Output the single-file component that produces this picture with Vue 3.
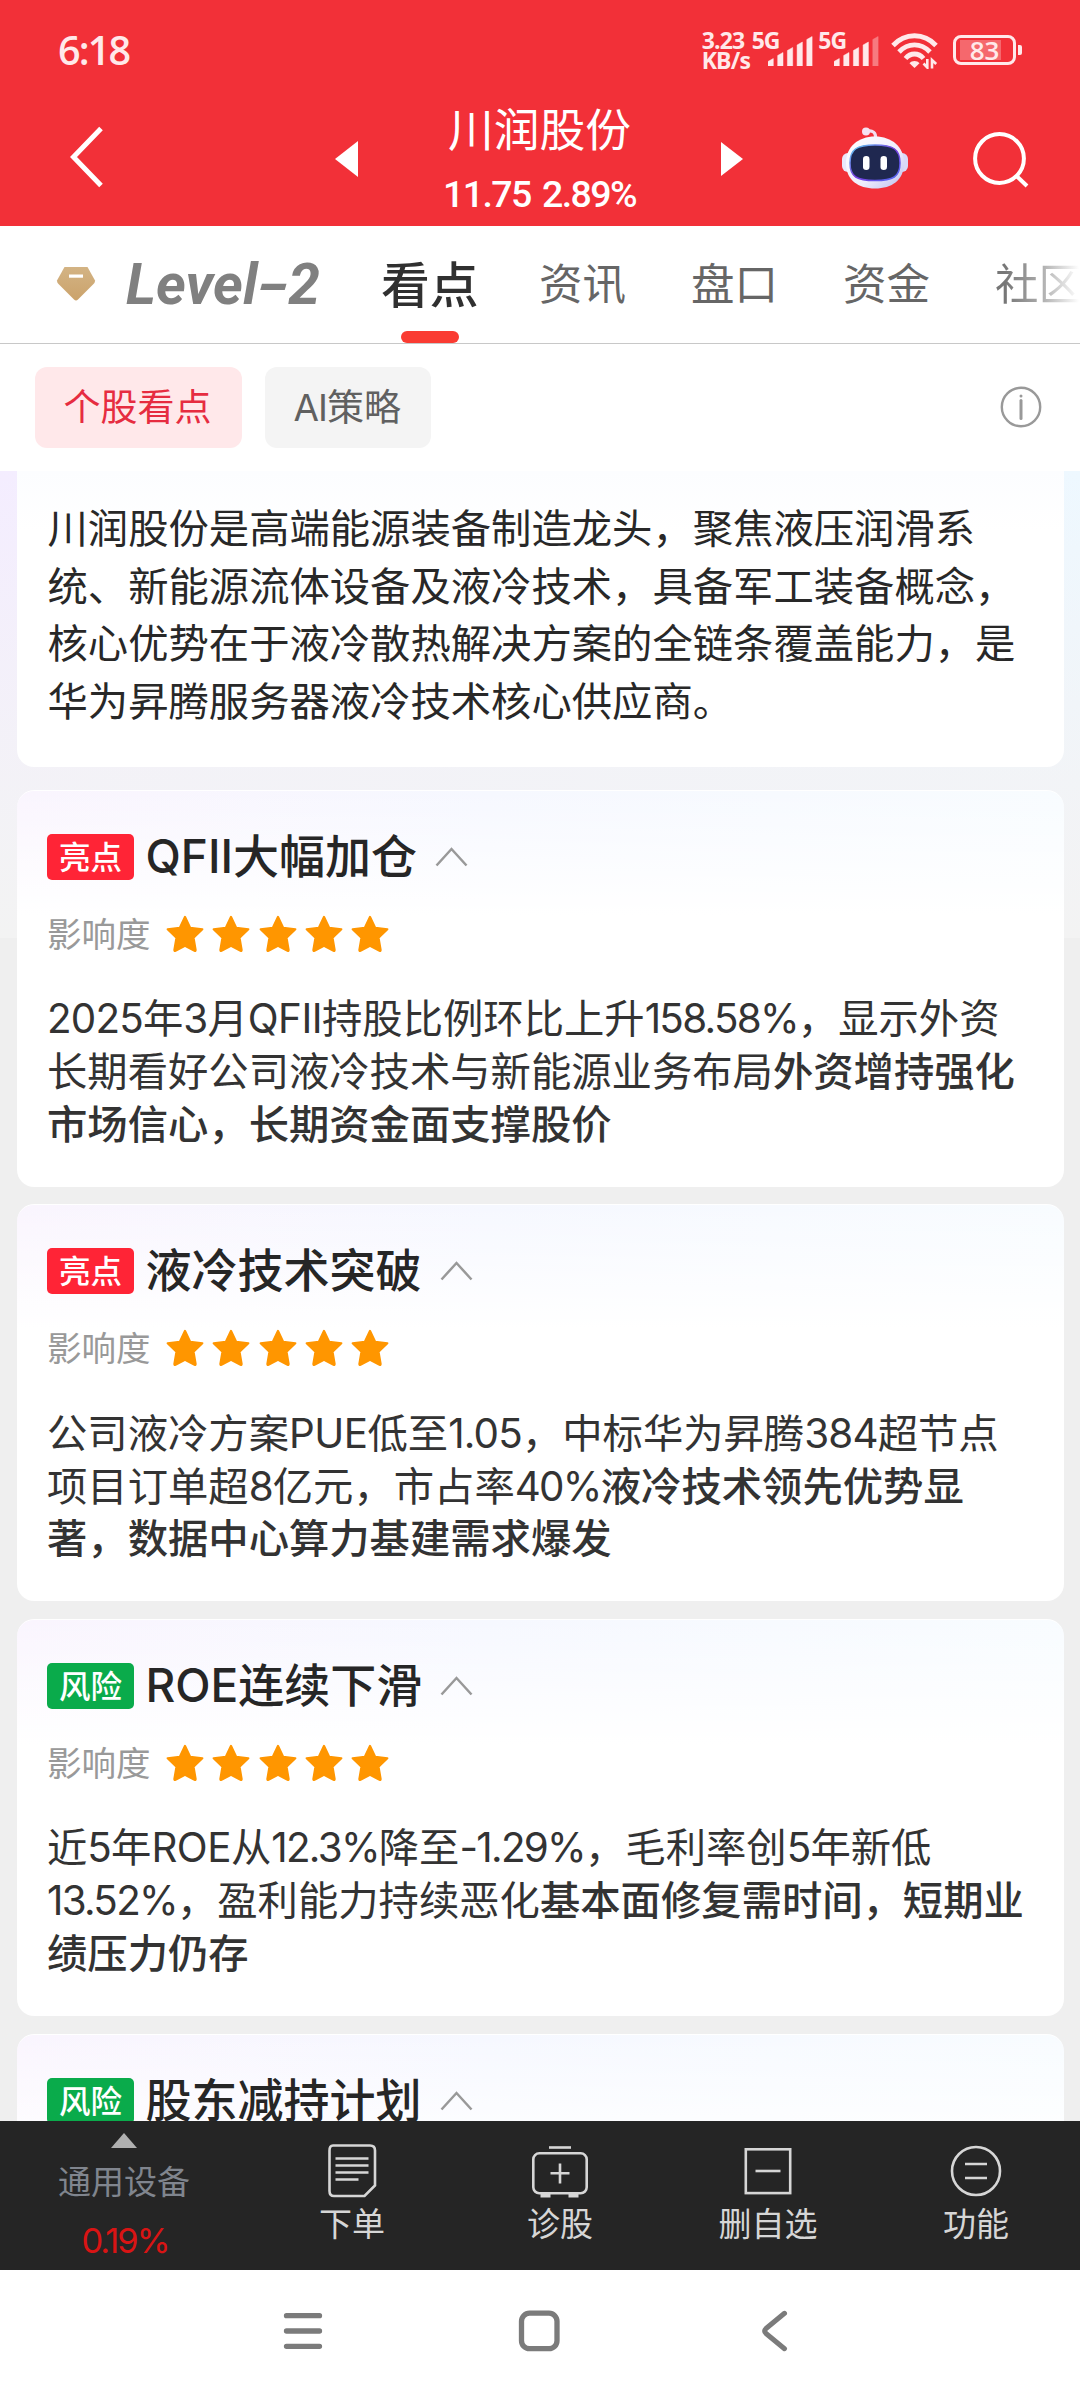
<script setup>
const bars = [
  { x: 0, h: 7 },
  { x: 9.7, h: 13 },
  { x: 19.4, h: 18 },
  { x: 29.1, h: 23.5 },
  { x: 38.8, h: 29 },
]

const tabs = ['资讯', '盘口', '资金', '社区']

const intro = [
  '川润股份是高端能源装备制造龙头，聚焦液压润滑系',
  '统、新能源流体设备及液冷技术，具备军工装备概念，',
  '核心优势在于液冷散热解决方案的全链条覆盖能力，是',
  '华为昇腾服务器液冷技术核心供应商。',
]

const cards = [
  {
    kind: 'good',
    tag: '亮点',
    title: 'QFII大幅加仓',
    lines: [
      [{ t: '2025年3月QFII持股比例环比上升158.58%，显示外资' }],
      [{ t: '长期看好公司液冷技术与新能源业务布局' }, { t: '外资增持强化', b: true }],
      [{ t: '市场信心，长期资金面支撑股价', b: true }],
    ],
  },
  {
    kind: 'good',
    tag: '亮点',
    title: '液冷技术突破',
    lines: [
      [{ t: '公司液冷方案PUE低至1.05，中标华为昇腾384超节点' }],
      [{ t: '项目订单超8亿元，市占率40%' }, { t: '液冷技术领先优势显', b: true }],
      [{ t: '著，数据中心算力基建需求爆发', b: true }],
    ],
  },
  {
    kind: 'risk',
    tag: '风险',
    title: 'ROE连续下滑',
    lines: [
      [{ t: '近5年ROE从12.3%降至-1.29%，毛利率创5年新低' }],
      [{ t: '13.52%，盈利能力持续恶化' }, { t: '基本面修复需时间，短期业', b: true }],
      [{ t: '绩压力仍存', b: true }],
    ],
  },
  { kind: 'risk', tag: '风险', title: '股东减持计划', lines: [] },
]

// Splits mixed text so Latin words, figures and percentages can carry their own tracking.
const kindOf = (s) =>
  /^[A-Z]/.test(s) ? 'abc' : /%$/.test(s) ? 'pct' : /^[-\d]/.test(s) ? 'num' : 'han'
const split = (text) =>
  text.match(/[A-Z]+|[-\d.%]+|[^A-Z\-\d.%]+/g).map((t) => ({ t, k: kindOf(t) }))
const runs = (line) => line.flatMap((r) => split(r.t).map((s) => ({ ...s, b: !!r.b })))
</script>

<template>
  <div class="screen">
    <header class="top">
      <div class="status">
        <span class="clock">6:18</span>
        <div class="status-right">
          <div class="speed"><span>3.23</span><span>KB/s</span></div>
          <div v-for="n in 2" :key="n" class="signal">
            <span class="net">5G</span>
            <svg width="45" height="30" viewBox="0 0 45 30">
              <path
                v-for="(b, i) in bars"
                :key="i"
                :d="`M${b.x} 30V${32.5 - b.h}L${b.x + 5.3} ${29.5 - b.h}V30Z`"
                fill="#ffe9ea"
                :opacity="n === 2 && i === 4 ? 0.4 : 1"
                stroke="#ffe9ea"
                stroke-width=".5"
                stroke-linejoin="round"
              />
            </svg>
          </div>
          <svg class="wifi" width="48" height="36" viewBox="0 0 48 36" fill="none" stroke="#ffe9ea" stroke-width="4.8">
            <path d="M2 12.5C14 -.5 33 -.5 45 12.5" />
            <path d="M8 19C17 9.5 30 9.5 39 19" />
            <path d="M14.5 25.5C19.5 19.5 27.5 19.5 32.5 25.5" />
            <path d="M23.5 35L18.5 30.2C21 27.2 26 27.2 28.5 30.2Z" fill="#ffe9ea" stroke="none" />
            <path d="M36.3 26V34.5L32.5 30.5M41 35.5V27L45.2 31" stroke-width="2.6" />
          </svg>
          <div class="battery">
            <div class="cell"><i class="fill"></i><span>83</span></div>
            <i class="nub"></i>
          </div>
        </div>
      </div>
      <div class="bar">
        <svg class="back" width="34" height="62" viewBox="0 0 34 62">
          <path d="M31 2.5L3.5 31L31 59.5" fill="none" stroke="#fff" stroke-width="5" />
        </svg>
        <svg class="prev" width="23" height="36" viewBox="0 0 23 36"><path d="M23 0V36L0 18Z" fill="#fff" /></svg>
        <div class="stock">
          <span class="name">川润股份</span>
          <span class="price">11.75 2.89%</span>
        </div>
        <svg class="next" width="22" height="34" viewBox="0 0 22 34"><path d="M0 0V34L22 17Z" fill="#fff" /></svg>
        <svg class="robot" width="66" height="62" viewBox="0 0 66 62">
          <defs>
            <linearGradient id="shell" x1="0" y1="0" x2="1" y2="1">
              <stop offset="0" stop-color="#fff" />
              <stop offset=".6" stop-color="#efedfc" />
              <stop offset="1" stop-color="#b9bdee" />
            </linearGradient>
            <linearGradient id="rim" x1="0" y1="0" x2="1" y2="1">
              <stop offset="0" stop-color="#5fd4f2" />
              <stop offset=".5" stop-color="#7a3de0" />
              <stop offset="1" stop-color="#4d6bf0" />
            </linearGradient>
          </defs>
          <path d="M24 4.5C31 2.5 34 6 33.5 11" fill="none" stroke="#f3dff0" stroke-width="3.2" />
          <circle cx="24" cy="4.6" r="4" fill="#f6e2f2" />
          <rect x="0" y="26" width="12" height="19" rx="6" fill="#e9e7fb" />
          <rect x="54" y="26" width="12" height="19" rx="6" fill="#d9daf8" />
          <path d="M33 9.5C50 9.5 62 20 62 36C62 53 50 61.5 33 61.5C16 61.5 4 53 4 36C4 20 16 9.5 33 9.5Z" fill="url(#shell)" />
          <path d="M33 18C51 18 58 22 58 36C58 50 51 53.5 33 53.5C15 53.5 8 50 8 36C8 22 15 18 33 18Z" fill="#1f2850" stroke="url(#rim)" stroke-width="1.5" />
          <rect x="21" y="29" width="6.5" height="14" rx="3.2" fill="#fff" />
          <rect x="38.5" y="29" width="6.5" height="14" rx="3.2" fill="#fff" />
        </svg>
        <svg class="search" width="56" height="56" viewBox="0 0 56 56" fill="none" stroke="#fff" stroke-width="4">
          <circle cx="26.5" cy="26.5" r="24.4" />
          <path d="M43.5 44L54 54" />
        </svg>
      </div>
    </header>

    <nav class="tabs">
      <svg class="gem" width="40" height="36" viewBox="0 0 40 36">
        <defs>
          <linearGradient id="gold" x1="0" y1="0" x2="0" y2="1">
            <stop offset="0" stop-color="#d3b384" />
            <stop offset="1" stop-color="#cba36b" />
          </linearGradient>
        </defs>
        <path d="M8.5 1H31.5L39 14.5C39 16 38.5 17 37.5 18L22 33.5Q20 35.5 18 33.5L2.5 18C1.5 17 1 16 1 14.5Z" fill="url(#gold)" />
        <rect x="13" y="8.5" width="14" height="3.2" fill="#fff" />
      </svg>
      <span class="level">Level<span class="dash">-</span>2</span>
      <span class="tab on">看点</span>
      <span v-for="t in tabs" :key="t" class="tab" :class="{ last: t === '社区' }">{{ t }}</span>
    </nav>

    <div class="chips">
      <span class="chip active">个股看点</span>
      <span class="chip"><span class="abc">AI</span>策略</span>
      <svg class="info" width="42" height="42" viewBox="0 0 42 42">
        <circle cx="21" cy="21" r="19.2" fill="none" stroke="#999" stroke-width="2.4" />
        <path d="M21 14.5V32.5" stroke="#999" stroke-width="3" stroke-linecap="round" />
        <circle cx="21" cy="10" r="1.5" fill="#999" />
      </svg>
    </div>

    <main class="feed">
      <section class="card intro">
        <p v-for="l in intro" :key="l">{{ l }}</p>
      </section>
      <section v-for="c in cards" :key="c.title" class="card item">
        <div class="head">
          <span class="tag" :class="c.kind">{{ c.tag }}</span>
          <span class="title"><span v-for="s in split(c.title)" :key="s.t" :class="s.k">{{ s.t }}</span></span>
          <svg width="33" height="20" viewBox="0 0 33 20">
            <path d="M1.5 18.5L16.5 2L31.5 18.5" fill="none" stroke="#999" stroke-width="2.5" />
          </svg>
        </div>
        <div class="impact">
          <span>影响度</span>
          <svg v-for="s in 5" :key="s" width="38" height="38" viewBox="0 0 38 38">
            <path
              d="M19 1.8L24.2 12.7L36.4 14.3L27.6 22.7L29.7 34.9Q29.8 36.4 28.5 35.9L19 30.9L9.5 35.9Q8.2 36.4 8.3 34.9L10.4 22.7L1.6 14.3L13.8 12.7Z"
              fill="#ff9600"
              stroke="#ff9600"
              stroke-width="2"
              stroke-linejoin="round"
            />
          </svg>
        </div>
        <div class="body">
          <p v-for="(line, i) in c.lines" :key="i"><span v-for="(r, j) in runs(line)" :key="j" :class="[r.k, { strong: r.b }]">{{ r.t }}</span></p>
        </div>
      </section>
    </main>

    <footer class="tools">
      <div class="sector">
        <svg width="26" height="15" viewBox="0 0 26 15"><path d="M13 0L26 15H0Z" fill="#b0b0b0" /></svg>
        <span class="sector-name">通用设备</span>
        <span class="sector-pct">0.19%</span>
      </div>
      <div class="tool">
        <svg width="60" height="56" viewBox="0 0 60 56" fill="none" stroke="#d6d6d6" stroke-width="2.6">
          <path d="M11 2.5H48Q53 2.5 53 7.5V42.5L42.5 53H12Q7.5 53 7.5 48V7.5Q7.5 2.5 11 2.5Z" />
          <path d="M13.5 15.5H46.5M13.5 22.5H46.5M13.5 29.5H46.5M13.5 36.5H36.5" />
        </svg>
        <span>下单</span>
      </div>
      <div class="tool">
        <svg width="60" height="56" viewBox="0 0 60 56" fill="none" stroke="#d6d6d6" stroke-width="2.6">
          <path d="M19 4.5H41" />
          <rect x="3.3" y="10.3" width="53.4" height="40" rx="6" />
          <path d="M30 20.5V40.5M20.5 30.3H39.5" />
          <path d="M10.5 52.5H20.5M38.5 52.5H48.5" stroke-width="4" />
        </svg>
        <span>诊股</span>
      </div>
      <div class="tool">
        <svg width="60" height="56" viewBox="0 0 60 56" fill="none" stroke="#d6d6d6" stroke-width="2.6">
          <rect x="7.8" y="6.3" width="44.4" height="43.8" />
          <path d="M17.5 28H42.5" />
        </svg>
        <span>删自选</span>
      </div>
      <div class="tool">
        <svg width="60" height="56" viewBox="0 0 60 56" fill="none" stroke="#d6d6d6" stroke-width="2.6">
          <circle cx="30" cy="28" r="24" />
          <path d="M19 21H41M19 35H41" />
        </svg>
        <span>功能</span>
      </div>
    </footer>

    <div class="sysnav">
      <svg width="42" height="42" viewBox="0 0 42 42" fill="none" stroke="#7b7b7b" stroke-width="5.3" stroke-linecap="round">
        <path d="M4.5 5.7H37.5M4.5 21H37.5M4.5 36.3H37.5" />
      </svg>
      <svg width="42" height="42" viewBox="0 0 42 42" fill="none" stroke="#7b7b7b" stroke-width="5.3">
        <rect x="3.5" y="3.2" width="35.5" height="35.5" rx="8" />
      </svg>
      <svg width="42" height="42" viewBox="0 0 42 42" fill="none" stroke="#7b7b7b" stroke-width="5" stroke-linecap="round" stroke-linejoin="round">
        <path d="M30.5 3.3L12 18.5Q9.5 21 12 23.5L30.5 38.7" />
      </svg>
    </div>
  </div>
</template>

<style>
body {
  margin: 0;
}
</style>

<style scoped>
.screen {
  width: 1080px;
  height: 2400px;
  display: flex;
  flex-direction: column;
  overflow: hidden;
  background: #fff;
  font-family: 'Open Sans', 'Noto Sans CJK SC', sans-serif;
  white-space: nowrap;
}
svg {
  display: block;
  flex: none;
}
p {
  margin: 0;
}
.abc,
.num,
.pct {
  font-family: Inter, sans-serif;
  line-height: 1;
}
.abc {
  letter-spacing: -0.5px;
}
.num {
  letter-spacing: -0.8px;
}
.pct {
  letter-spacing: -1.7px;
}
.top {
  height: 226px;
  flex: none;
  background: #f23038;
  color: #fff;
}
.status {
  height: 100px;
  display: flex;
  justify-content: space-between;
  padding: 0 58px 0 58px;
  color: #ffe9ea;
}
.clock {
  font-size: 39.5px;
  font-weight: 600;
  line-height: 100px;
  letter-spacing: -1.8px;
}
.status-right {
  display: flex;
  align-items: flex-start;
}
.speed {
  display: flex;
  flex-direction: column;
  width: 50px;
  margin-top: 30px;
  font-size: 23px;
  line-height: 20px;
  font-weight: 700;
  letter-spacing: -0.8px;
}
.signal {
  display: flex;
  width: 66.7px;
  margin-top: 30px;
}
.net {
  width: 16px;
  font-size: 23px;
  line-height: 20px;
  font-weight: 700;
  letter-spacing: -1px;
}
.signal svg {
  margin-top: 6px;
}
.wifi {
  margin: 33px 0 0 6px;
}
.battery {
  display: flex;
  align-items: center;
  gap: 2px;
  margin: 35px 0 0 14px;
}
.cell {
  position: relative;
  box-sizing: border-box;
  width: 63px;
  height: 30px;
  border: 3px solid #ffe9ea;
  border-radius: 8px;
  text-align: center;
  font-size: 26px;
  line-height: 24px;
  font-weight: 600;
}
.cell span {
  position: relative;
}
.fill {
  position: absolute;
  left: 4px;
  top: 2px;
  width: 41px;
  height: 20px;
  background: rgba(255, 255, 255, 0.27);
}
.nub {
  width: 4px;
  height: 10px;
  border-radius: 0 2px 2px 0;
  background: #ffe9ea;
}
.bar {
  height: 126px;
  display: flex;
  align-items: flex-start;
}
.back {
  margin: 26px 0 0 70px;
}
.prev {
  margin: 41px 0 0 231px;
}
.stock {
  width: 363px;
  display: flex;
  flex-direction: column;
  align-items: center;
}
.name {
  font-size: 45.8px;
  line-height: 58px;
}
.price {
  margin-top: 8px;
  font-family: Roboto, sans-serif;
  font-size: 37.5px;
  line-height: 56px;
  font-weight: 500;
  letter-spacing: -1.6px;
  word-spacing: 3.5px;
}
.next {
  margin-top: 42px;
}
.robot {
  margin: 27px 0 0 99px;
}
.search {
  margin: 32px 0 0 65px;
}
.tabs {
  box-sizing: border-box;
  height: 118px;
  flex: none;
  display: flex;
  align-items: flex-start;
  border-bottom: 1px solid #c8c8c8;
}
.gem {
  margin: 40px 0 0 56px;
}
.level {
  width: 255px;
  margin-left: 30px;
  font-family: Roboto, sans-serif;
  font-size: 57px;
  line-height: 117px;
  font-weight: 700;
  font-style: italic;
  color: #808080;
}
.dash {
  display: inline-block;
  line-height: 1;
  padding: 0 4.5px;
  transform: scaleX(1.6);
}
.tab {
  width: 152px;
  flex: none;
  font-size: 43.5px;
  line-height: 116px;
  color: #666;
}
.tab.on {
  position: relative;
  width: 158px;
  font-size: 48.8px;
  font-weight: 500;
  color: #303030;
}
.tab.on::after {
  content: '';
  position: absolute;
  left: 20px;
  top: 104.5px;
  width: 58px;
  height: 12.5px;
  border-radius: 6.3px;
  background: #fa3b32;
}
.tab.last {
  width: 85px;
  overflow: hidden;
  background: linear-gradient(90deg, #777 10px, #aaa 45px, #fff 84px);
  background-clip: text;
  -webkit-background-clip: text;
  color: transparent;
}
.chips {
  height: 127px;
  flex: none;
  display: flex;
  align-items: flex-start;
  padding: 23px 38px 0 35px;
  box-sizing: border-box;
}
.chip {
  height: 81px;
  padding: 0 30.5px 0 28.5px;
  border-radius: 12px;
  margin-right: 23px;
  font-size: 37px;
  line-height: 79px;
  background: #f4f4f4;
  color: #606060;
}
.chip.active {
  background: #ffe8ea;
  color: #e62c40;
}
.chip .abc {
  letter-spacing: -1px;
}
.info {
  margin: 19px 0 0 auto;
}
.feed {
  height: 1650px;
  flex: none;
  overflow: hidden;
  padding: 0 16px 0 17px;
  background:
    linear-gradient(180deg, rgba(240, 240, 240, 0) 0%, rgba(243, 243, 245, 0.9) 75%, #f3f3f3 100%) 0 0 / 100% 467px no-repeat,
    linear-gradient(90deg, #f4edff, #eef8ff) 0 0 / 100% 467px no-repeat,
    #efefef;
}
.card {
  box-sizing: border-box;
  border-radius: 17px;
  background: #fff;
}
.intro {
  height: 296px;
  margin-bottom: 22.7px;
  padding: 28px 0 0 30.5px;
  border-radius: 0 0 17px 17px;
  background: linear-gradient(180deg, #fcfdff, #fff 60px);
  font-size: 40.35px;
  line-height: 57.6px;
  color: #282828;
}
.item {
  height: 397px;
  margin-bottom: 17.67px;
  padding: 44px 0 0 30px;
  box-shadow: inset 0 1px 0 #fff;
  background:
    linear-gradient(180deg, rgba(255, 255, 255, 0), #fff 125px),
    linear-gradient(90deg, #faf5fe, #f6f8ff 45%, #f8fcff);
}
.head {
  height: 46px;
  display: flex;
  align-items: center;
}
.tag {
  width: 87px;
  height: 46px;
  border-radius: 5px;
  text-align: center;
  font-size: 31.5px;
  line-height: 45px;
  font-weight: 500;
  color: #fff;
}
.good {
  background: #ff2436;
}
.risk {
  background: #0aab4b;
}
.title {
  height: 46px;
  margin: -4px 18px 0 11.5px;
  font-size: 46px;
  line-height: 46px;
  font-weight: 500;
  color: #262626;
}
.title .abc {
  letter-spacing: 0;
}
.impact {
  height: 38px;
  margin-top: 35px;
  display: flex;
  align-items: center;
  gap: 8.3px;
}
.impact span {
  width: 110.7px;
  font-size: 34.5px;
  line-height: 38px;
  color: #999;
}
.body {
  margin-top: 39.3px;
  font-size: 40.35px;
  line-height: 52.9px;
  color: #333;
}
.strong {
  font-weight: 500;
}
.tools {
  height: 149px;
  flex: none;
  display: flex;
  background: #252525;
}
.sector {
  width: 248px;
  display: flex;
  flex-direction: column;
  align-items: center;
}
.sector svg {
  margin-top: 12px;
}
.sector-name {
  margin-top: 12px;
  font-size: 33px;
  line-height: 44px;
  color: #80858e;
}
.sector-pct {
  margin: 15px 0 0 2px;
  font-family: Inter, sans-serif;
  font-size: 34.5px;
  line-height: 44px;
  letter-spacing: -2px;
  color: #d91414;
}
.tool {
  width: 208px;
  display: flex;
  flex-direction: column;
  align-items: center;
  font-size: 33px;
  line-height: 44px;
  color: #d6d6d6;
}
.tool svg {
  margin: 22px 0 3px;
}
.sysnav {
  height: 130px;
  flex: none;
  display: flex;
  justify-content: center;
  gap: 194px;
  padding: 40px 3px 0 0;
  box-sizing: border-box;
  background: #fff;
}
</style>
